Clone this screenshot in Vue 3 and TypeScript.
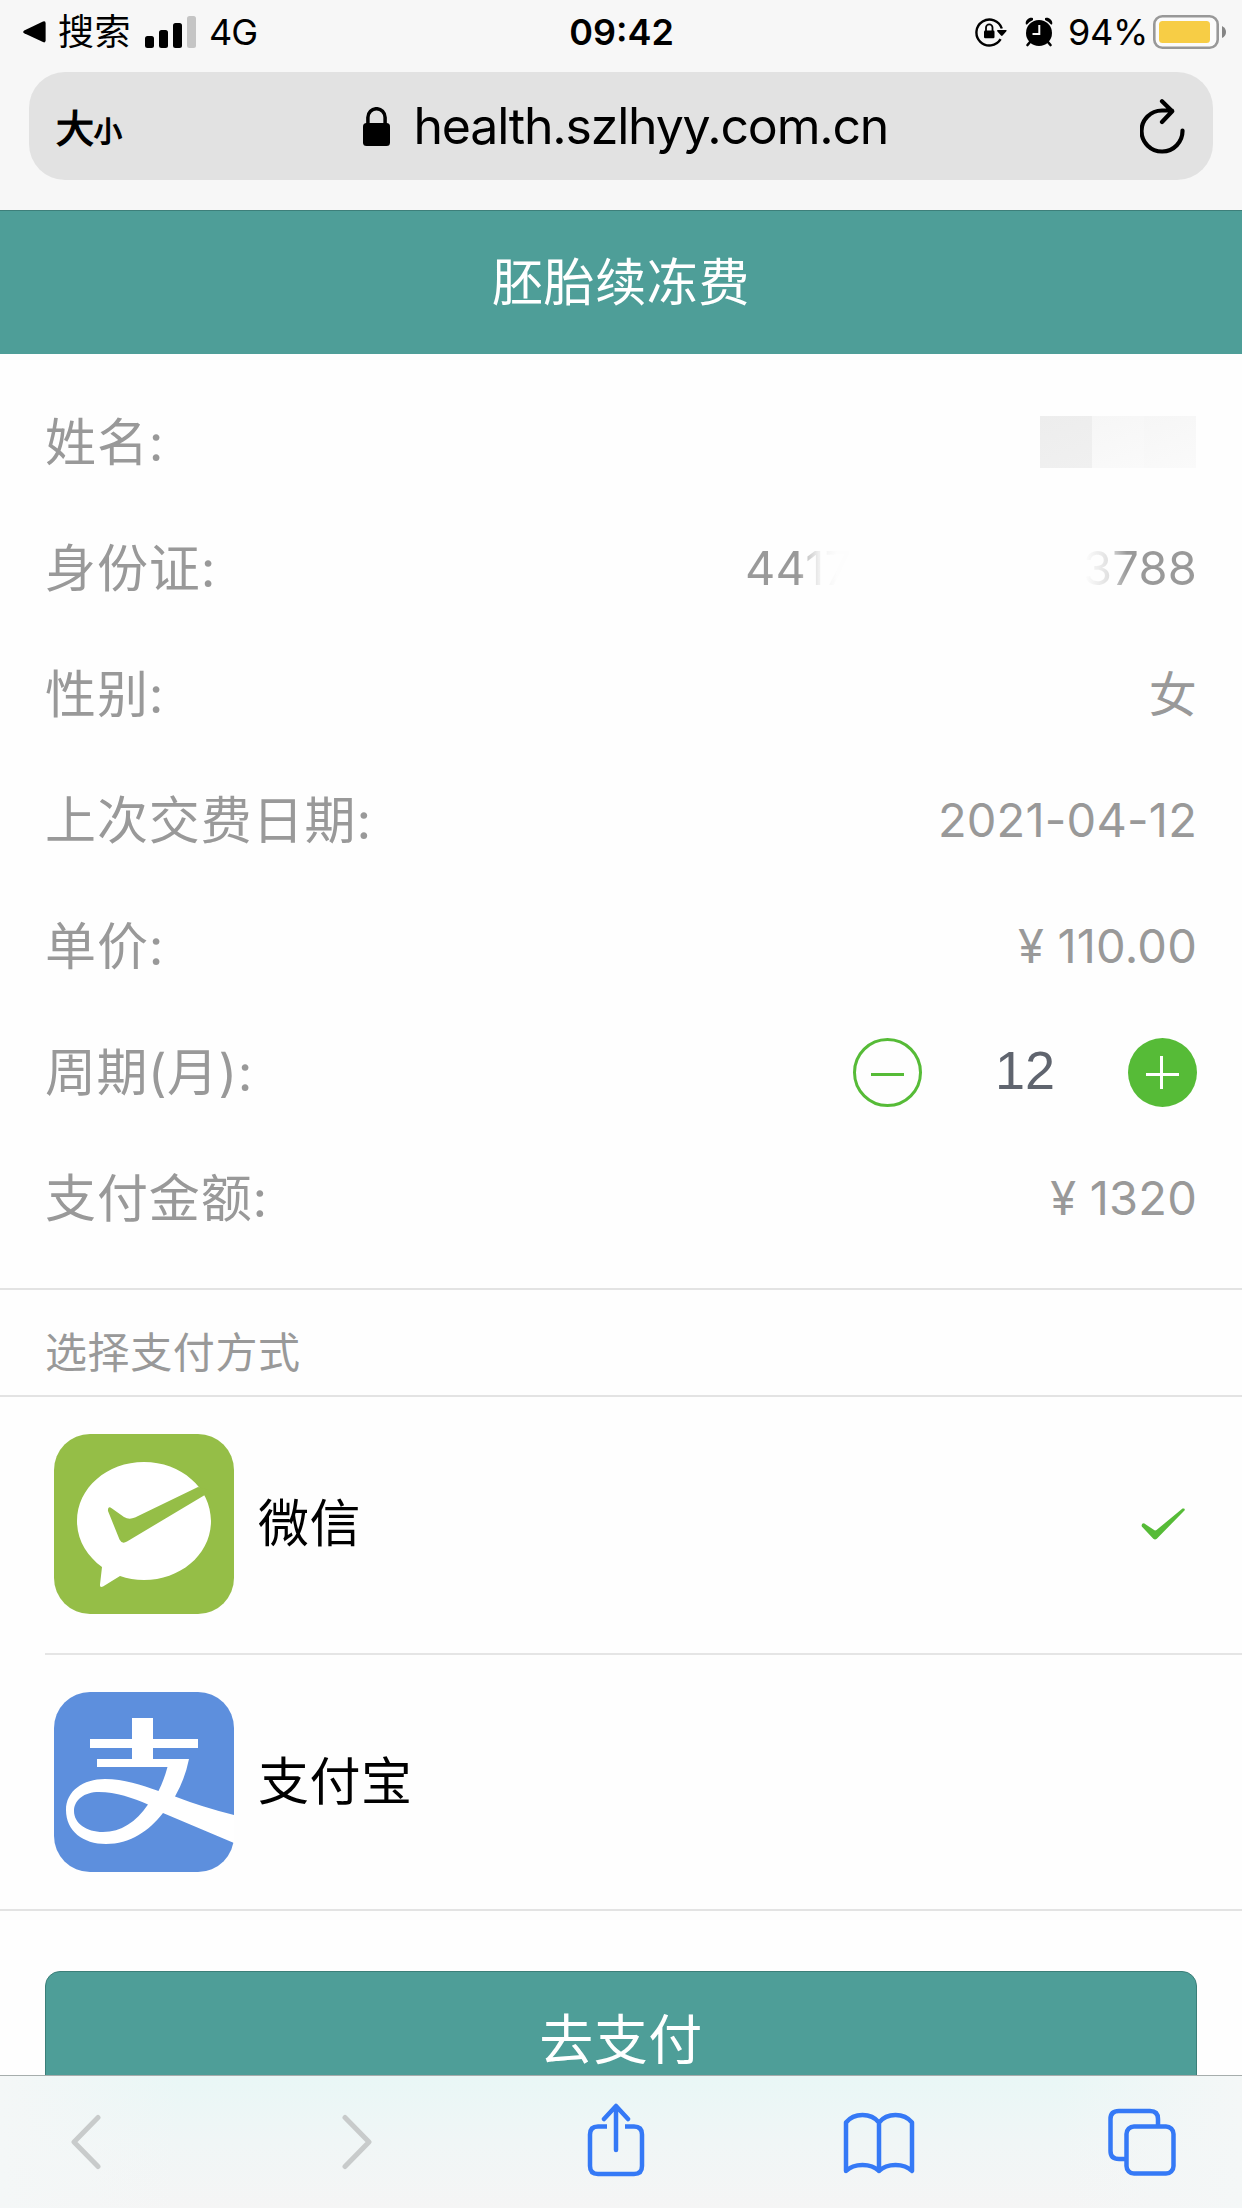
<script setup lang="ts">
import { computed, ref } from 'vue'

interface InfoRow {
  key: string
  label: string
  value: string
}

interface PayMethod {
  id: 'wechat' | 'alipay'
  name: string
}

const months = ref(12)
const unitPrice = 110
const total = computed(() => `¥ ${months.value * unitPrice}`)

const rows = computed<InfoRow[]>(() => [
  { key: 'name', label: '姓名:', value: '' },
  { key: 'idcard', label: '身份证:', value: '' },
  { key: 'gender', label: '性别:', value: '女' },
  { key: 'date', label: '上次交费日期:', value: '2021-04-12' },
  { key: 'price', label: '单价:', value: `¥ ${unitPrice.toFixed(2)}` },
  { key: 'period', label: '周期(月):', value: '' },
  { key: 'total', label: '支付金额:', value: total.value },
])

const methods: PayMethod[] = [
  { id: 'wechat', name: '微信' },
  { id: 'alipay', name: '支付宝' },
]
const selected = ref<PayMethod['id']>('wechat')

function step(delta: number) {
  months.value = Math.max(1, months.value + delta)
}
</script>

<template>
  <div class="screen">
    <header class="chrome">
      <div class="status">
        <div class="status-left">
          <svg class="back-app" width="23" height="24" viewBox="0 0 23 24">
            <path d="M1.2 10.6 20 1.6q2.6-1 2.6 1.4v17.600q0 2.600-2.600 1.500L1.200 13.200q-2-1.300 0-2.600z" />
          </svg>
          <span class="back-label">搜索</span>
          <svg class="signal" width="51" height="32" viewBox="0 0 51 32">
            <rect x="0" y="20" width="9" height="12" rx="2.500" />
            <rect x="14" y="14" width="9" height="18" rx="2.500" />
            <rect x="28" y="7" width="9" height="25" rx="2.500" />
            <rect x="42" y="0" width="9" height="32" rx="2.500" fill="#c5c5c5" />
          </svg>
          <span class="net">4G</span>
        </div>
        <span class="clock">09:42</span>
        <div class="status-right">
          <svg class="rotlock" width="32" height="30" viewBox="0 0 32 30">
            <path d="M25.600 22.200A13 13 0 1 1 26.800 11.500" fill="none" stroke="#000" stroke-width="2.400" />
            <path d="M22.400 13h9q.5.800-.2 1.500l-3.600 4q-.8.800-1.600 0l-3.600-4q-.6-.8 0-1.500z" />
            <rect x="9" y="13.500" width="10.500" height="7.800" rx="1.200" />
            <path d="M11 14v-3.400a3.250 3.250 0 0 1 6.500 0V14" fill="none" stroke="#000" stroke-width="1.800" />
          </svg>
          <svg class="alarm" width="28" height="30" viewBox="0 0 28 30">
            <circle cx="14" cy="16" r="13" />
            <path d="M1 7.500C-.5 4 4-.5 8 1.200L8 3Q4 4.500 2 7.500zM27 7.500C28.500 4 24-.5 20 1.200L20 3q4 1.500 6 4.500z" />
            <path d="M5.500 24.500 2.500 28M22.500 24.500l3 3.500" stroke="#000" stroke-width="2.600" stroke-linecap="round" />
            <path d="M14.300 8v9H7.500" fill="none" stroke="#f7f7f7" stroke-width="2" />
          </svg>
          <span class="percent">94%</span>
          <svg class="battery" width="74" height="34" viewBox="0 0 74 34">
            <rect x="1.300" y="1.300" width="63.400" height="31.400" rx="8" fill="#fbfbfb" stroke="#989898" stroke-width="2.600" />
            <rect x="6" y="6" width="51" height="22" rx="3.500" fill="#f7cd45" />
            <path d="M69 11q4 2 4 6t-4 6z" fill="#858585" />
          </svg>
        </div>
      </div>
      <div class="urlbar">
        <span class="textsize">大<small>小</small></span>
        <div class="address">
          <svg class="lock" width="27" height="39" viewBox="0 0 27 39">
            <rect x="0" y="16" width="27" height="23" rx="3.500" />
            <path d="M4.900 18v-7.500a8.600 8.800 0 0 1 17.200 0V18" fill="none" stroke="#000" stroke-width="3.500" />
          </svg>
          <span class="host">health.szlhyy.com.cn</span>
        </div>
        <svg class="reload" width="46" height="56" viewBox="0 0 46 56" fill="none" stroke="#000" stroke-width="4.200" stroke-linecap="round" stroke-linejoin="round">
          <path d="M42.500 32.500A20.500 20.500 0 1 1 22 12.500H32M22 3.200 32.200 13.200 22 24" />
        </svg>
      </div>
    </header>

    <main class="page">
      <h1 class="title">胚胎续冻费</h1>

      <section class="info">
        <div v-for="row in rows" :key="row.key" class="row">
          <span class="label" :class="row.key">{{ row.label }}</span>
          <span v-if="row.key === 'name'" class="mosaic"><i /><i /><i /></span>
          <span v-else-if="row.key === 'idcard'" class="value idcard">
            <span class="fade-out">4417</span><span class="fade-in">3788</span>
          </span>
          <div v-else-if="row.key === 'period'" class="stepper">
            <button class="minus" type="button" @click="step(-1)">
              <svg width="69" height="69" viewBox="0 0 69 69">
                <circle cx="34.500" cy="34.500" r="33" fill="none" stroke="#56bb37" stroke-width="3" />
                <path d="M18 35h33v3H18z" fill="#56bb37" />
              </svg>
            </button>
            <span class="count">{{ months }}</span>
            <button class="plus" type="button" @click="step(1)">
              <svg width="69" height="69" viewBox="0 0 69 69">
                <circle cx="34.500" cy="34.500" r="34.500" fill="#56bb37" />
                <path d="M18 35h33v3H18zM32 18h3v33h-3z" fill="#fff" />
              </svg>
            </button>
          </div>
          <span v-else class="value" :class="row.key">{{ row.value }}</span>
        </div>
      </section>

      <h2 class="subhead">选择支付方式</h2>

      <ul class="methods">
        <li v-for="m in methods" :key="m.id" class="method" @click="selected = m.id">
          <svg v-if="m.id === 'wechat'" class="logo" width="180" height="180" viewBox="0 0 180 180">
            <rect width="180" height="180" rx="36" fill="#95be47" />
            <path d="M90 28C127 28 157 54 157 87S127 146 90 146Q77 146 66 142L49 152.500Q45.500 154 46 150.500L48 133C33 122 23 106 23 87 23 54 53 28 90 28z" fill="#fff" />
            <path d="M54 77Q53.500 71 58 74.500L70 83Q75 86 81 83.500L144 53 155 56 150 61.500 73 107.500Q68 110.500 65.500 105.500z" fill="#95be47" />
          </svg>
          <svg v-else class="logo" width="180" height="180" viewBox="0 0 180 180">
            <rect width="180" height="180" rx="36" fill="#5d8fdd" />
            <path d="M78 26H99V47H144V56H99V67H135Q131 87 121 104.500Q148 115 180 123V151L109 121C95 139 76 152 52 152 29 152 12 139 12 118 12 99 29 87 51 87 70 87 87 93 104.500 99Q110 88 113.500 75H43V67H78V56H36V47H78zM94 112.500C79 106 62 100 45 100 30 100 20 108 20 119 20 131 32 140 49 140 67 140 82 130 94 112.500z" fill="#fff" fill-rule="evenodd" />
          </svg>
          <span class="method-name">{{ m.name }}</span>
          <svg v-if="m.id === selected" class="tick" width="44" height="32" viewBox="0 0 44 32">
            <path d="M.8 18.500Q0 15.200 3 15.300L13.500 22.300Q14.500 22.700 15.500 22L41.500.6Q44.200-.2 43.700 2.200L15.800 30.800Q14 32.300 12.300 30.800z" fill="#56bb37" />
          </svg>
        </li>
      </ul>

      <button class="pay" type="button">去支付</button>
    </main>

    <nav class="toolbar">
      <svg class="t-back" width="32" height="56" viewBox="0 0 32 56"><path d="M28 3.500 4 28 28 52.500" /></svg>
      <svg class="t-fwd" width="32" height="56" viewBox="0 0 32 56"><path d="M4 3.500 28 28 4 52.500" /></svg>
      <svg class="t-share" width="58" height="74" viewBox="0 0 58 74">
        <path d="M20 23.500H11Q3 23.500 3 31.500V63Q3 71 11 71H47Q55 71 55 63V31.500Q55 23.500 47 23.500H38" stroke-linecap="butt" />
        <path d="M29 47V3.500M17 16 29 3 41 16" />
      </svg>
      <svg class="t-book" width="72" height="62" viewBox="0 0 72 62">
        <path d="M36 10.500C28 .5 11 .5 3 10.500V59C11 51 28 51 36 59 44 51 61 51 69 59V10.500C61 .5 44 .5 36 10.500V59" />
      </svg>
      <svg class="t-tabs" width="68" height="68" viewBox="0 0 68 68">
        <path d="M17 51H11Q2.500 51 2.500 43V11Q2.500 3 11 3H42Q50 3 50 11V17" stroke-linecap="butt" />
        <rect x="18.500" y="18.500" width="47" height="47" rx="7.500" />
      </svg>
    </nav>
  </div>
</template>

<style>
html,
body {
  margin: 0;
  background: #fff;
}
</style>

<style scoped>
.screen {
  display: flex;
  flex-direction: column;
  width: 1242px;
  height: 2208px;
  overflow: hidden;
  background: #fefefe;
  color: #000;
  font-family: Inter, "Noto Sans CJK SC", sans-serif;
}
svg {
  display: block;
  flex: none;
}
button {
  padding: 0;
  border: 0;
  background: none;
  font-family: inherit;
}
.chrome {
  flex: none;
  box-sizing: border-box;
  height: 210px;
  background: #f7f7f7;
}
.status {
  display: grid;
  grid-template-columns: 1fr auto 1fr;
  height: 72px;
  box-sizing: border-box;
  padding: 0 15px 10px 23px;
  align-items: center;
  font-size: 36px;
  line-height: 62px;
  white-space: nowrap;
}
.status-left,
.status-right {
  display: flex;
  align-items: center;
}
.status-right {
  justify-content: flex-end;
}
.back-label {
  margin-left: 12px;
  width: 74px;
  padding-top: 1px;
  letter-spacing: 0.500px;
}
.signal {
  margin-left: 13px;
}
.net {
  margin-left: 13px;
  letter-spacing: -1px;
}
.clock {
  margin-right: 7px;
  font-weight: 600;
}
.rotlock {
  margin-right: 18px;
}
.alarm {
  margin-right: 15px;
}
.percent {
  letter-spacing: -0.300px;
}
.battery {
  margin-left: 5px;
}
.urlbar {
  display: flex;
  align-items: center;
  justify-content: space-between;
  box-sizing: border-box;
  width: 1184px;
  height: 108px;
  margin: 0 29px;
  padding: 0 27px 0 27px;
  border-radius: 36px;
  background: #e2e2e2;
}
.textsize {
  width: 78px;
  padding-top: 7px;
  font-size: 38px;
  line-height: 60px;
  -webkit-text-stroke: 1.400px #000;
}
.textsize small {
  font-size: 28px;
}
.address {
  display: flex;
  align-items: center;
}
.lock {
  margin-right: 24px;
}
.host {
  width: 498px;
  font-size: 50px;
  line-height: 60px;
  letter-spacing: -1.200px;
  white-space: nowrap;
}
.page {
  flex: 1;
  min-height: 0;
  overflow: hidden;
}
.title {
  box-sizing: border-box;
  height: 144px;
  margin: 0;
  border-top: 1px solid #3d7f7a;
  background: #4e9e98;
  color: #fff;
  font-size: 51px;
  font-weight: 400;
  line-height: 144px;
  letter-spacing: 0.600px;
  text-align: center;
}
.info {
  box-sizing: border-box;
  height: 936px;
  padding: 25px 45px 0;
  border-bottom: 2px solid #e3e3e3;
  color: #999;
}
.row {
  display: flex;
  align-items: center;
  justify-content: space-between;
  height: 126px;
}
.label {
  padding-top: 1px;
  font-size: 51px;
  line-height: 72px;
  letter-spacing: 0.900px;
}
.label.period {
  letter-spacing: 0.500px;
}
.value {
  font-size: 47px;
  line-height: 72px;
  letter-spacing: 0.200px;
}
.value.gender {
  padding-top: 2px;
  font-size: 48px;
}
.mosaic {
  display: flex;
  width: 156px;
  height: 52px;
  margin-right: 1px;
}
.mosaic i {
  flex: 1;
  background: linear-gradient(160deg, #f6f6f6, #fafafa);
}
.mosaic i:first-child {
  background: linear-gradient(160deg, #ededed, #f0f0f0);
}
.idcard {
  display: flex;
  justify-content: space-between;
  width: 452px;
}
.fade-out,
.fade-in {
  background: linear-gradient(90deg, #999 54px, #c8c8c8 62px, #f0f0f0 74px, #fdfdfd 92px);
  background-clip: text;
  -webkit-background-clip: text;
  color: transparent;
}
.fade-in {
  background-image: linear-gradient(90deg, #fdfdfd 2px, #e0e0e0 26px, #999 44px);
}
.stepper {
  display: flex;
  align-items: center;
  justify-content: space-between;
  width: 344px;
}
.count {
  padding-bottom: 3px;
  color: #5f646e;
  font-family: "Liberation Sans", Arial, sans-serif;
  font-size: 54px;
  line-height: 69px;
}
.subhead {
  box-sizing: border-box;
  height: 107px;
  margin: 0;
  padding-left: 45px;
  border-bottom: 2px solid #e3e3e3;
  color: #999;
  font-size: 42px;
  font-weight: 400;
  line-height: 125px;
  letter-spacing: 0.600px;
}
.methods {
  margin: 0;
  padding: 0 0 0 45px;
  border-bottom: 2px solid #e3e3e3;
  list-style: none;
}
.method {
  display: flex;
  align-items: center;
  box-sizing: border-box;
  height: 256px;
  padding: 0 57px 2px 9px;
}
.method + .method {
  padding-bottom: 1px;
  border-top: 2px solid #e5e5e5;
}
.method-name {
  flex: 1;
  margin-left: 24px;
  font-size: 51px;
  line-height: 72px;
  letter-spacing: 0.500px;
}
.pay {
  display: block;
  box-sizing: border-box;
  width: 1152px;
  height: 138px;
  margin: 60px 45px 0;
  border: 1px solid #3b7f79;
  border-radius: 15px;
  background: #4e9e98;
  color: #fff;
  font-size: 54px;
  line-height: 138px;
  letter-spacing: 0.500px;
}
.toolbar {
  display: flex;
  flex: none;
  align-items: flex-start;
  box-sizing: border-box;
  height: 133px;
  border-top: 1px solid #a6adac;
  background:
    linear-gradient(90deg, #f4f7f7 0, rgba(244, 247, 247, 0) 180px, rgba(244, 247, 247, 0) 1060px, #f4f7f7 100%),
    linear-gradient(#e9f7f6, #f0f6f6 50%, #f5f5f5);
}
.toolbar svg {
  fill: none;
  stroke: #3579f6;
  stroke-width: 4.500px;
  stroke-linecap: round;
  stroke-linejoin: round;
}
.toolbar .t-back,
.toolbar .t-fwd {
  margin-top: 38px;
  stroke: #c8cbcb;
  stroke-width: 5px;
}
.t-back {
  margin-left: 70px;
}
.t-fwd {
  margin-left: 239px;
}
.t-share {
  margin: 27px 0 0 214px;
}
.t-book {
  margin: 36px 0 0 198px;
}
.t-tabs {
  margin: 32px 0 0 193px;
}
</style>
